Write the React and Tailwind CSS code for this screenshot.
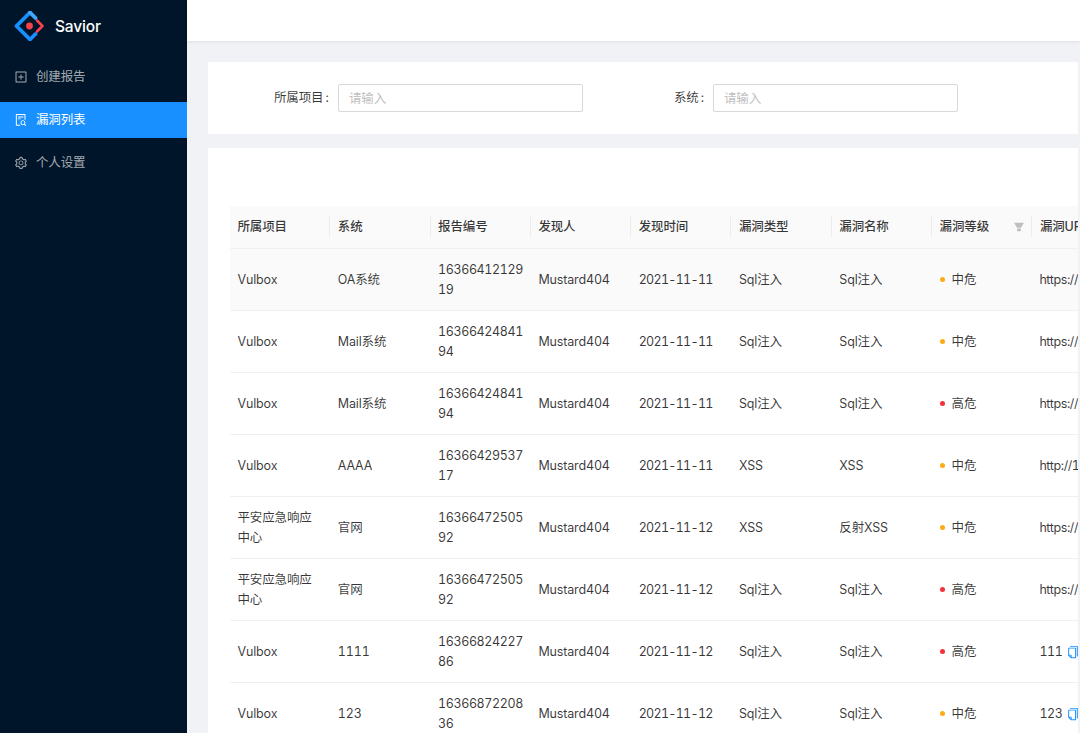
// Vulnerability list page
import { AiOutlinePlusSquare, AiOutlineFileSearch, AiOutlineSetting, AiOutlineCopy, AiFillFilter } from "react-icons/ai"

const columns = ["所属项目", "系统", "报告编号", "发现人", "发现时间", "漏洞类型", "漏洞名称", "漏洞等级", "漏洞URL"]

const rows = [
    ["Vulbox", "OA系统", "1636641212919", "2021-11-11", "Sql注入", "Sql注入", "中危", "https://vulbox.example", false],
    ["Vulbox", "Mail系统", "1636642484194", "2021-11-11", "Sql注入", "Sql注入", "中危", "https://vulbox.example", false],
    ["Vulbox", "Mail系统", "1636642484194", "2021-11-11", "Sql注入", "Sql注入", "高危", "https://vulbox.example", false],
    ["Vulbox", "AAAA", "1636642953717", "2021-11-11", "XSS", "XSS", "中危", "http://127.0.0.1", false],
    ["平安应急响应中心", "官网", "1636647250592", "2021-11-12", "XSS", "反射XSS", "中危", "https://vulbox.example", false],
    ["平安应急响应中心", "官网", "1636647250592", "2021-11-12", "Sql注入", "Sql注入", "高危", "https://vulbox.example", false],
    ["Vulbox", "1111", "1636682422786", "2021-11-12", "Sql注入", "Sql注入", "高危", "111", true],
    ["Vulbox", "123", "1636687220836", "2021-11-12", "Sql注入", "Sql注入", "中危", "123", true],
]

function Logo() {
    return (
        <svg width="32" height="30" viewBox="0 0 32 30" fill="none">
            <path d="M16 1.5 2.5 15 16 28.5l5.5-5.5" stroke="#1890ff" strokeWidth="3.8" strokeLinejoin="round" strokeLinecap="round" />
            <path d="M16 1.5l5.5 5.5" stroke="#40a9ff" strokeWidth="3.8" strokeLinecap="round" />
            <path d="M23 9.5 28.5 15 23 20.5" stroke="#f5424d" strokeWidth="2.6" strokeLinejoin="round" strokeLinecap="round" />
            <circle cx="15.5" cy="15" r="3.4" fill="#f5424d" />
        </svg>
    )
}

function MenuItem({ icon: Icon, text, active }) {
    return (
        <div className={`h-[36px] flex items-center pl-[14px] gap-[8px] text-[12.5px] ${active ? "bg-[#1890ff] text-white" : "text-[#ffffffa6]"}`}>
            <Icon size={14} />
            <span>{text}</span>
        </div>
    )
}

function Level({ value }) {
    return (
        <div className="flex items-center gap-[7px]">
            <span className={`w-[5px] h-[5px] rounded-full ${value === "高危" ? "bg-[#f5313d]" : "bg-[#faad14]"}`}></span>
            <span>{value}</span>
        </div>
    )
}

export default function App() {
    return (
        <div className="flex h-[733px] w-[1080px] overflow-hidden bg-[#f0f2f5] text-[12.5px] tabular-nums tracking-[-0.15px] font-['Inter','Noto_Sans_CJK_SC',sans-serif] text-[#000000c7]">
            {/* Sidebar */}
            <aside className="w-[187px] shrink-0 bg-[#001529]">
                <div className="h-[52px] flex items-center pl-[14px] gap-[9px]">
                    <Logo />
                    <span className="text-white text-[15.5px] font-medium pt-[1px]">Savior</span>
                </div>
                <div className="flex flex-col gap-[7px] mt-[7px]">
                    <MenuItem icon={AiOutlinePlusSquare} text="创建报告" />
                    <MenuItem icon={AiOutlineFileSearch} text="漏洞列表" active />
                    <MenuItem icon={AiOutlineSetting} text="个人设置" />
                </div>
            </aside>

            <main className="flex-1 min-w-0 flex flex-col">
                <header className="h-[41px] shrink-0 bg-white shadow-[0_1px_3px_rgba(0,21,41,0.08)]"></header>

                <div className="flex-1 min-h-0 flex flex-col pl-[21px] pr-[2px] pt-[21px] gap-[14px]">
                    {/* Search */}
                    <section className="h-[72px] shrink-0 bg-white flex items-center pl-[66px]">
                        <label className="w-[64px] shrink-0 pt-[1px]">所属项目<span className="ml-[2px]">:</span></label>
                        <input placeholder="请输入" className="w-[245px] h-[28px] border border-[#d9d9d9] rounded-[2px] px-[10px] text-[12.5px] outline-none placeholder:text-[#bfbfbf]" />
                        <label className="ml-[91px] w-[39px] shrink-0 pt-[1px]">系统<span className="ml-[2px]">:</span></label>
                        <input placeholder="请输入" className="w-[245px] h-[28px] border border-[#d9d9d9] rounded-[2px] px-[10px] text-[12.5px] outline-none placeholder:text-[#bfbfbf]" />
                    </section>

                    {/* Table */}
                    <section className="flex-1 min-h-0 bg-white overflow-hidden pl-[22px] pt-[58px]">
                        <table className="table-fixed w-[1003px] border-collapse">
                            <colgroup>
                                {columns.map((c, i) => (
                                    <col key={c} className={i < 8 ? "w-[100.3px]" : "w-[200.6px]"} />
                                ))}
                            </colgroup>
                            <thead>
                                <tr className="h-[42px] bg-[#fafafa] border-b border-[#f0f0f0]">
                                    {columns.map((c, i) => (
                                        <th key={c} className="p-0 text-left font-medium">
                                            <div className={`relative h-[21px] flex items-center pl-[7.5px] pt-[2px] whitespace-nowrap ${i < 8 ? "border-r border-[#ececec]" : ""}`}>
                                                {c}
                                                {c === "漏洞等级" && <AiFillFilter size={12} className="absolute right-[6px] top-[5px] text-[#bfbfbf]" />}
                                            </div>
                                        </th>
                                    ))}
                                </tr>
                            </thead>
                            <tbody>
                                {rows.map((r, i) => (
                                    <tr key={i} className={`h-[62px] border-b border-[#f0f0f0] leading-[20px] ${i === 0 ? "bg-[#fafafa]" : ""}`}>
                                        <td className="pl-[7.5px] pr-[14px] pt-[1px] pb-0">{r[0]}</td>
                                        <td className="pl-[7.5px] pr-[6px] pt-[1px] pb-0">{r[1]}</td>
                                        <td className="pl-[7.5px] pr-[6px] pt-[1px] pb-0 break-all tracking-[-0.4px]">{r[2]}</td>
                                        <td className="pl-[7.5px] pr-[6px] pt-[1px] pb-0">Mustard404</td>
                                        <td className="pl-[7.5px] pr-[6px] pt-[1px] pb-0 tracking-[-0.7px]">{r[3]}</td>
                                        <td className="pl-[7.5px] pr-[6px] pt-[1px] pb-0">{r[4]}</td>
                                        <td className="pl-[7.5px] pr-[6px] pt-[1px] pb-0">{r[5]}</td>
                                        <td className="pl-[7.5px] pr-[6px] pt-[1px] pb-0"><Level value={r[6]} /></td>
                                        <td className="pl-[7px] pr-[6px] pt-[1px] pb-0 whitespace-nowrap tracking-[-0.4px]">
                                            <span className="inline-flex items-center gap-[3px]">
                                                {r[7]}
                                                {r[8] && <AiOutlineCopy size={14} className="text-[#1890ff]" />}
                                            </span>
                                        </td>
                                    </tr>
                                ))}
                            </tbody>
                        </table>
                    </section>
                </div>
            </main>
        </div>
    )
}
